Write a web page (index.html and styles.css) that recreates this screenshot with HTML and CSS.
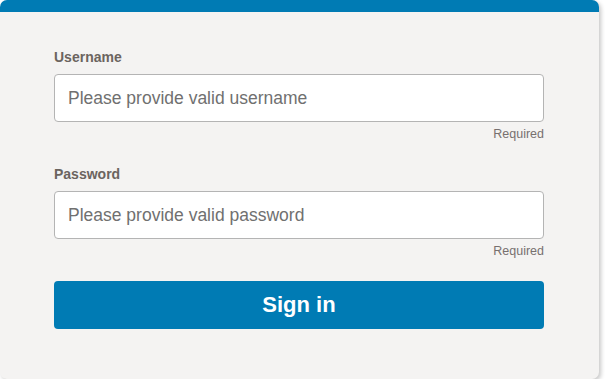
FILE: index.html
```html
<!DOCTYPE html>
<html lang="en">
<head>
<meta charset="utf-8">
<title>Sign in</title>
<link rel="stylesheet" href="styles.css">
</head>
<body>
<div class="card">
  <form class="form">
    <div class="field">
      <label class="label" for="user">Username</label>
      <input class="input" id="user" type="text" placeholder="Please provide valid username">
      <div class="hint">Required</div>
    </div>
    <div class="field">
      <label class="label" for="pass">Password</label>
      <input class="input" id="pass" type="password" placeholder="Please provide valid password">
      <div class="hint">Required</div>
    </div>
    <button class="btn" type="button">Sign in</button>
  </form>
</div>
</body>
</html>
```

FILE: styles.css
```css
html, body {
  margin: 0;
  padding: 0;
  background: #ffffff;
  font-family: "Liberation Sans", Arial, sans-serif;
}
.card {
  box-sizing: border-box;
  width: 599px;
  height: 379px;
  background: #f4f3f2;
  border-top: 12px solid #007bb4;
  border-radius: 7px;
  box-shadow: 2px 2px 4px rgba(0, 0, 0, 0.22);
  padding: 37px 55px 0 54px;
}
.form {
  display: flex;
  flex-direction: column;
}
.field {
  display: flex;
  flex-direction: column;
  margin-bottom: 24px;
}
.field + .field {
  margin-bottom: 22px;
}
.label {
  font-size: 14px;
  line-height: 16px;
  font-weight: bold;
  color: #6b645f;
  margin-bottom: 9px;
}
.input {
  box-sizing: border-box;
  height: 48px;
  width: 100%;
  border: 1px solid #b4b4b4;
  border-radius: 4px;
  background: #ffffff;
  padding: 0 13px;
  font-family: "Liberation Sans", Arial, sans-serif;
  font-size: 17.5px;
  color: #333;
  outline: none;
}
.input::placeholder {
  color: #707070;
  opacity: 1;
}
.hint {
  text-align: right;
  font-size: 12.5px;
  line-height: 15px;
  color: #77706f;
  margin-top: 5px;
}
.btn {
  box-sizing: border-box;
  height: 48px;
  width: 100%;
  border: none;
  border-radius: 4px;
  background: #007bb4;
  color: #ffffff;
  font-family: "Liberation Sans", Arial, sans-serif;
  font-size: 22px;
  font-weight: bold;
  cursor: pointer;
}
```
